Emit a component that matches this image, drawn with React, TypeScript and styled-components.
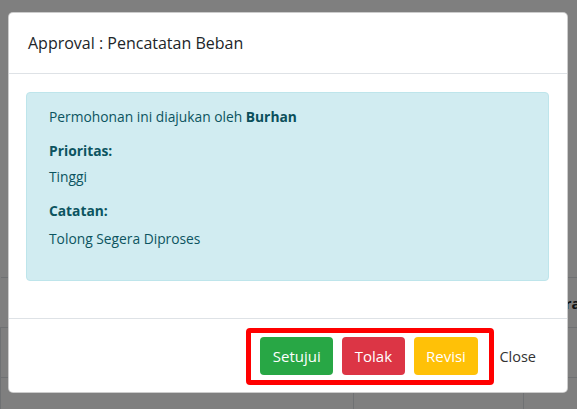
import React from "react";
import styled, { createGlobalStyle } from "styled-components";

const GlobalStyle = createGlobalStyle`
  html, body {
    margin: 0;
    padding: 0;
  }
  body {
    width: 577px;
    height: 409px;
    overflow: hidden;
    background: #ffffff;
    font-family: "Open Sans", "Noto Sans", sans-serif;
    color: #212529;
  }
  * {
    box-sizing: border-box;
  }
`;

const Page = styled.div`
  position: relative;
  width: 577px;
  height: 409px;
  overflow: hidden;
  padding-top: 277px;
`;

const Table = styled.table`
  width: 640px;
  table-layout: fixed;
  border-collapse: collapse;
  font-size: 15px;
`;

const Row = styled.tr`
  height: 50px;
  border-top: 1px solid #dee2e6;
  border-bottom: 1px solid #dee2e6;
`;

const Cell = styled.td<{ $width?: number; $head?: boolean }>`
  width: ${(p) => (p.$width ? `${p.$width}px` : "auto")};
  padding: 0 ${(p) => (p.$head ? "16px" : "12px")};
  border-left: ${(p) => (p.$head ? "none" : "1px solid #dee2e6")};
  font-weight: ${(p) => (p.$head ? 700 : 400)};
  white-space: nowrap;
  vertical-align: middle;
`;

const Backdrop = styled.div`
  position: absolute;
  inset: 0;
  background: rgba(0, 0, 0, 0.5);
  padding: 12px 9px 0 8px;
`;

const Modal = styled.div`
  width: 560px;
  background: #ffffff;
  border: 1px solid rgba(0, 0, 0, 0.2);
  border-radius: 5px;
  display: flex;
  flex-direction: column;
`;

const Header = styled.div`
  padding: 18px 19px;
  border-bottom: 1px solid #dee2e6;
`;

const Title = styled.h5`
  margin: 0;
  font-size: 16px;
  line-height: 24px;
  font-weight: 400;
  color: #212529;
`;

const Body = styled.div`
  padding: 18px 18px 18px 17px;
`;

const Alert = styled.div`
  background: #d1ecf1;
  border: 1px solid #bee5eb;
  border-radius: 4px;
  color: #0c5460;
  padding: 13px 22px 31px;
  margin-bottom: 19px;
  font-size: 13.8px;
  line-height: 21px;
`;

const Line = styled.p<{ $gap?: number; $bold?: boolean }>`
  margin: ${(p) => p.$gap ?? 0}px 0 0;
  font-weight: ${(p) => (p.$bold ? 700 : 400)};
`;

const Strong = styled.b`
  font-weight: 700;
  color: #0b4f5b;
`;

const Footer = styled.div`
  display: flex;
  justify-content: flex-end;
  align-items: center;
  gap: 5px;
  padding: 9px 31px 7px 19px;
  border-top: 1px solid #dee2e6;
`;

const Highlight = styled.div`
  display: flex;
  gap: 9px;
  padding: 4px 11px 5px 9px;
  border: 5px solid #ff0000;
  border-radius: 4px;
`;

const Action = styled.button<{ $bg: string }>`
  height: 38px;
  padding: 0 12.5px;
  border: none;
  border-radius: 4px;
  background: ${(p) => p.$bg};
  color: #ffffff;
  font-family: inherit;
  font-size: 15px;
  cursor: pointer;
`;

const CloseButton = styled.button`
  padding: 0;
  border: none;
  background: none;
  color: #333333;
  font-family: inherit;
  font-size: 14.5px;
  cursor: pointer;
`;

export default function App() {
  return (
    <>
      <GlobalStyle />
      <Page>
        <Table>
          <tbody>
            <Row>
              <Cell $head $width={353} />
              <Cell $head $width={170} />
              <Cell $head>Mitra</Cell>
            </Row>
            <Row>
              <Cell $width={353} />
              <Cell $width={170} />
              <Cell />
            </Row>
            <Row>
              <Cell $width={353} />
              <Cell $width={170} />
              <Cell />
            </Row>
          </tbody>
        </Table>
        <Backdrop>
          <Modal>
            <Header>
              <Title>Approval : Pencatatan Beban</Title>
            </Header>
            <Body>
              <Alert>
                <Line>
                  Permohonan ini diajukan oleh <Strong>Burhan</Strong>
                </Line>
                <Line $gap={13} $bold>
                  Prioritas:
                </Line>
                <Line $gap={5}>Tinggi</Line>
                <Line $gap={13} $bold>
                  Catatan:
                </Line>
                <Line $gap={7}>Tolong Segera Diproses</Line>
              </Alert>
            </Body>
            <Footer>
              <Highlight>
                <Action $bg="#28a745">Setujui</Action>
                <Action $bg="#dc3545">Tolak</Action>
                <Action $bg="#ffc107">Revisi</Action>
              </Highlight>
              <CloseButton>Close</CloseButton>
            </Footer>
          </Modal>
        </Backdrop>
      </Page>
    </>
  );
}
